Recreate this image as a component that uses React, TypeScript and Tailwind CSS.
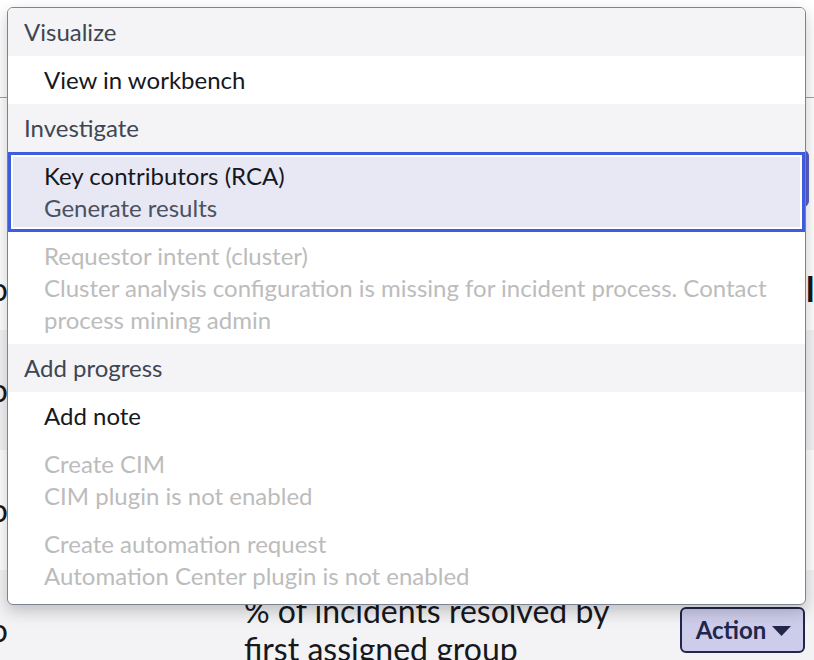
import React from "react";

const Header = ({ children }: { children: React.ReactNode }) => (
  <div className="h-[48px] flex items-center pl-[16px] bg-[#f4f4f6] text-[#3e4654] text-[24px] leading-[32px]">
    {children}
  </div>
);

const Item = ({
  title,
  sub,
  disabled,
  active,
}: {
  title: string;
  sub?: string;
  disabled?: boolean;
  active?: boolean;
}) => (
  <div
    className={
      "py-[8px] pl-[36px] pr-[20px] text-[24px] leading-[32px] " +
      (active
        ? "bg-[#e8e8f5] shadow-[inset_0_0_0_3px_#3e5ce0,inset_0_0_0_5px_#ffffff]"
        : "bg-white")
    }
  >
    <div className={disabled ? "text-[#bcbcbc]" : "text-[#16181d]"}>{title}</div>
    {sub && (
      <div className={disabled ? "text-[#bcbcbc]" : "text-[#4a5160]"}>{sub}</div>
    )}
  </div>
);

const Caret = () => (
  <svg width="19" height="10" viewBox="0 0 19 10" className="mt-[2px]">
    <path d="M0 0 H19 L9.5 10 Z" fill="#22264a" />
  </svg>
);

export default function App() {
  return (
    <div className="relative w-[814px] h-[660px] overflow-hidden bg-white font-['Lato',sans-serif]">
      {/* background page */}
      <div className="h-[98px] border-b border-[#9ea3ac] bg-white" />
      {/* row A */}
      <div className="h-[112px] flex items-end bg-white pb-[3px]">
        <div className="ml-[680px] w-[129px] h-[57px] rounded-[6px] bg-[#5b5fc7]" />
      </div>
      {/* row B */}
      <div className="h-[120px] flex items-center bg-white text-[32px] leading-[38px] text-[#16181d]">
        <div className="w-[8px] flex flex-col items-end whitespace-nowrap">
          <span>&nbsp;</span>
          <span>ratio</span>
        </div>
        <div className="ml-[798px] flex flex-col whitespace-nowrap font-bold text-[34px] leading-[38px]">
          <span>&nbsp;</span>
          <span>l</span>
        </div>
      </div>
      {/* row C */}
      <div className="h-[120px] flex items-center bg-[#f3f3f5] text-[32px] leading-[38px] text-[#16181d]">
        <div className="w-[8px] flex justify-end whitespace-nowrap">
          <span>ratio</span>
        </div>
      </div>
      {/* row D */}
      <div className="h-[120px] flex items-center bg-white text-[32px] leading-[38px] text-[#16181d]">
        <div className="w-[8px] flex justify-end whitespace-nowrap">
          <span>ratio</span>
        </div>
      </div>
      {/* row E */}
      <div className="h-[120px] flex items-center bg-[#f3f3f5] text-[32px] leading-[38px] text-[#16181d]">
        <div className="w-[8px] flex justify-end whitespace-nowrap">
          <span>to</span>
        </div>
        <div className="ml-[236px] w-[436px] flex flex-col whitespace-nowrap">
          <span>% of incidents resolved by</span>
          <span>first assigned group</span>
        </div>
        <button className="h-[46px] w-[125px] flex items-center justify-center gap-[6px] rounded-[6px] border-2 border-[#22264a] bg-[#cdcdeb] text-[24px] font-bold text-[#22264a] pl-[2px]">
          <span>Action</span>
          <Caret />
        </button>
      </div>

      {/* dropdown menu */}
      <div className="absolute left-[7px] top-[7px] w-[799px] rounded-[6px] border-[1.5px] border-[#7b8494] bg-white overflow-hidden pb-[4px] shadow-[0_6px_16px_rgba(0,0,0,0.22)]">
        <Header>Visualize</Header>
        <Item title="View in workbench" />
        <Header>Investigate</Header>
        <Item title="Key contributors (RCA)" sub="Generate results" active />
        <Item
          title="Requestor intent (cluster)"
          sub="Cluster analysis configuration is missing for incident process. Contact process mining admin"
          disabled
        />
        <Header>Add progress</Header>
        <Item title="Add note" />
        <Item title="Create CIM" sub="CIM plugin is not enabled" disabled />
        <Item
          title="Create automation request"
          sub="Automation Center plugin is not enabled"
          disabled
        />
      </div>
    </div>
  );
}
